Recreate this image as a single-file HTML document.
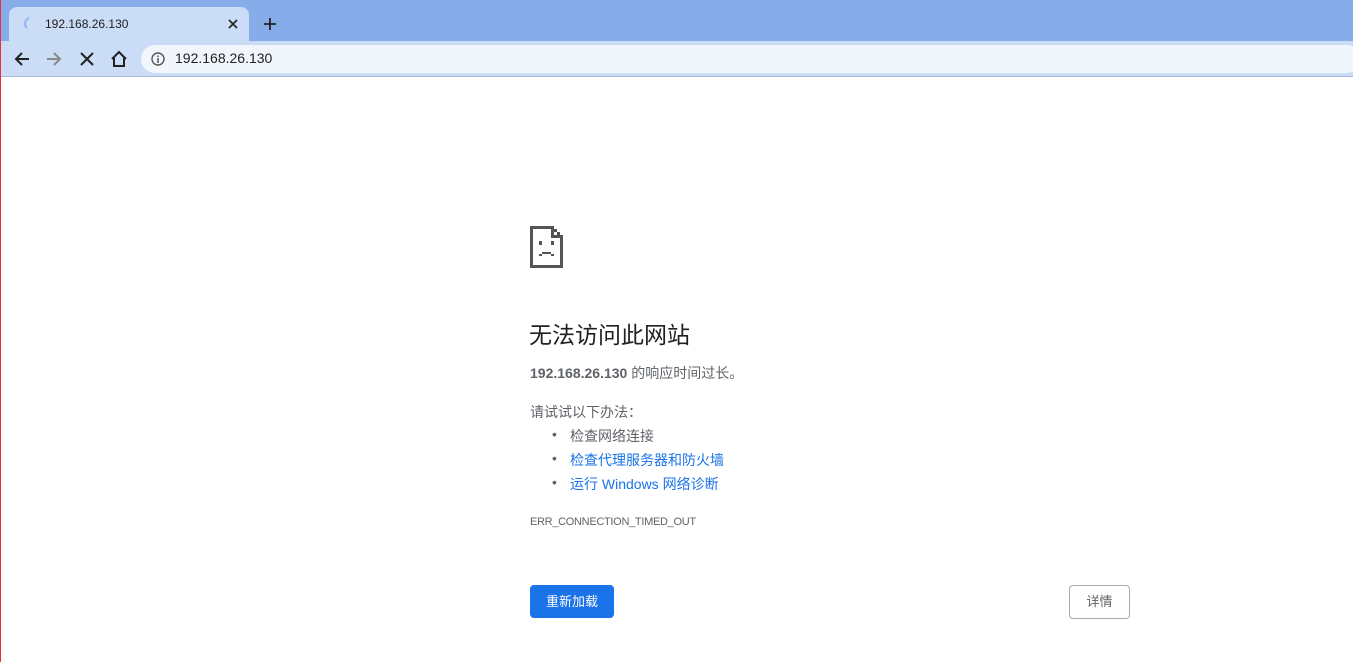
<!DOCTYPE html>
<html><head><meta charset="utf-8"><style>
*{margin:0;padding:0;box-sizing:border-box}
body{width:1353px;height:662px;overflow:hidden;background:#fff;font-family:"Liberation Sans","Noto Sans CJK SC",sans-serif;position:relative}
.top{position:absolute;left:0;top:0;width:1353px;height:41px;background:#86acea}
.tab{position:absolute;left:9px;top:7px;width:240px;height:36px;background:#cbdcf6;border-radius:8px 8px 0 0}
.bar{position:absolute;left:0;top:41px;width:1353px;height:36px;background:#cbdcf6;border-bottom:1px solid #a9b9d4}
.omni{position:absolute;left:141px;top:45px;width:1220px;height:28px;background:#f1f6fd;border-radius:14px}
.t{position:absolute;white-space:nowrap}
.main{color:#5f6368;font-size:14px}
a{color:#1a73e8;text-decoration:none}
</style></head><body>
<div class="top"></div>
<div class="tab"></div>
<svg class="t" style="left:20px;top:16px" width="14" height="14"><path d="M9 2 A6 6 0 0 0 7 12" stroke="#8ab4f8" stroke-width="2" fill="none"/></svg>
<div class="t" style="left:45px;top:17px;font-size:12px;color:#222">192.168.26.130</div>
<svg class="t" style="left:228px;top:19px" width="10" height="10"><path d="M1 1L9 9M9 1L1 9" stroke="#222" stroke-width="1.6"/></svg>
<svg class="t" style="left:263px;top:17px" width="14" height="14"><path d="M7 1V13M1 7H13" stroke="#222" stroke-width="1.8"/></svg>
<div class="bar"></div>
<svg class="t" style="left:13px;top:50px" width="18" height="18"><path d="M16 9H3M9 3L3 9L9 15" stroke="#222" stroke-width="2" fill="none"/></svg>
<svg class="t" style="left:45px;top:50px" width="18" height="18"><path d="M2 9H15M9 3L15 9L9 15" stroke="#888" stroke-width="2" fill="none"/></svg>
<svg class="t" style="left:80px;top:52px" width="14" height="14"><path d="M1 1L13 13M13 1L1 13" stroke="#222" stroke-width="2"/></svg>
<svg class="t" style="left:110px;top:50px" width="18" height="18"><path d="M2 9L9 2L16 9M4 8V16H14V8" stroke="#222" stroke-width="2" fill="none"/></svg>
<div class="omni"></div>
<svg class="t" style="left:151px;top:52px" width="14" height="14"><circle cx="7" cy="7" r="6" stroke="#555" stroke-width="1.4" fill="none"/><path d="M7 6V11M7 3.5V5" stroke="#555" stroke-width="1.5"/></svg>
<div class="t" style="left:175px;top:50px;font-size:14px;color:#222">192.168.26.130</div>
<div style="position:absolute;left:0;top:0;width:1px;height:662px;background:#e8303a"></div>
<svg class="t" style="left:530px;top:226px" width="34" height="43" fill="#555"><path d="M0 0H21V3H3V39H30V12H33V42H0Z"/><path d="M21 0H24V9H33V12H21Z"/><rect x="24" y="3" width="3" height="3"/><rect x="27" y="6" width="3" height="3"/><rect x="9" y="15" width="3" height="4"/><rect x="21" y="15" width="3" height="4"/><rect x="9" y="28" width="3" height="2"/><rect x="12" y="26" width="9" height="2"/><rect x="21" y="28" width="3" height="2"/></svg>
<div class="t" style="left:529px;top:316px;font-size:23px;color:#202124">无法访问此网站</div>
<div class="t main" style="left:530px;top:363px"><b>192.168.26.130</b> 的响应时间过长。</div>
<div class="t main" style="left:530px;top:402px">请试试以下办法：</div>
<div class="t main" style="left:552px;top:426px">•</div><div class="t main" style="left:570px;top:426px">检查网络连接</div>
<div class="t main" style="left:552px;top:450px">•</div><div class="t main" style="left:570px;top:450px"><a>检查代理服务器和防火墙</a></div>
<div class="t main" style="left:552px;top:474px">•</div><div class="t main" style="left:570px;top:474px"><a>运行 Windows 网络诊断</a></div>
<div class="t" style="left:530px;top:516px;font-size:11px;color:#5f6368;letter-spacing:-0.3px">ERR_CONNECTION_TIMED_OUT</div>
<div class="t" style="left:530px;top:585px;width:84px;height:33px;background:#1a73e8;border-radius:4px;color:#fff;font-size:13px;text-align:center;line-height:33px">重新加载</div>
<div class="t" style="left:1069px;top:585px;width:61px;height:34px;border:1px solid #aaa;border-radius:4px;color:#5f6368;font-size:13px;text-align:center;line-height:32px">详情</div>
</body></html>
